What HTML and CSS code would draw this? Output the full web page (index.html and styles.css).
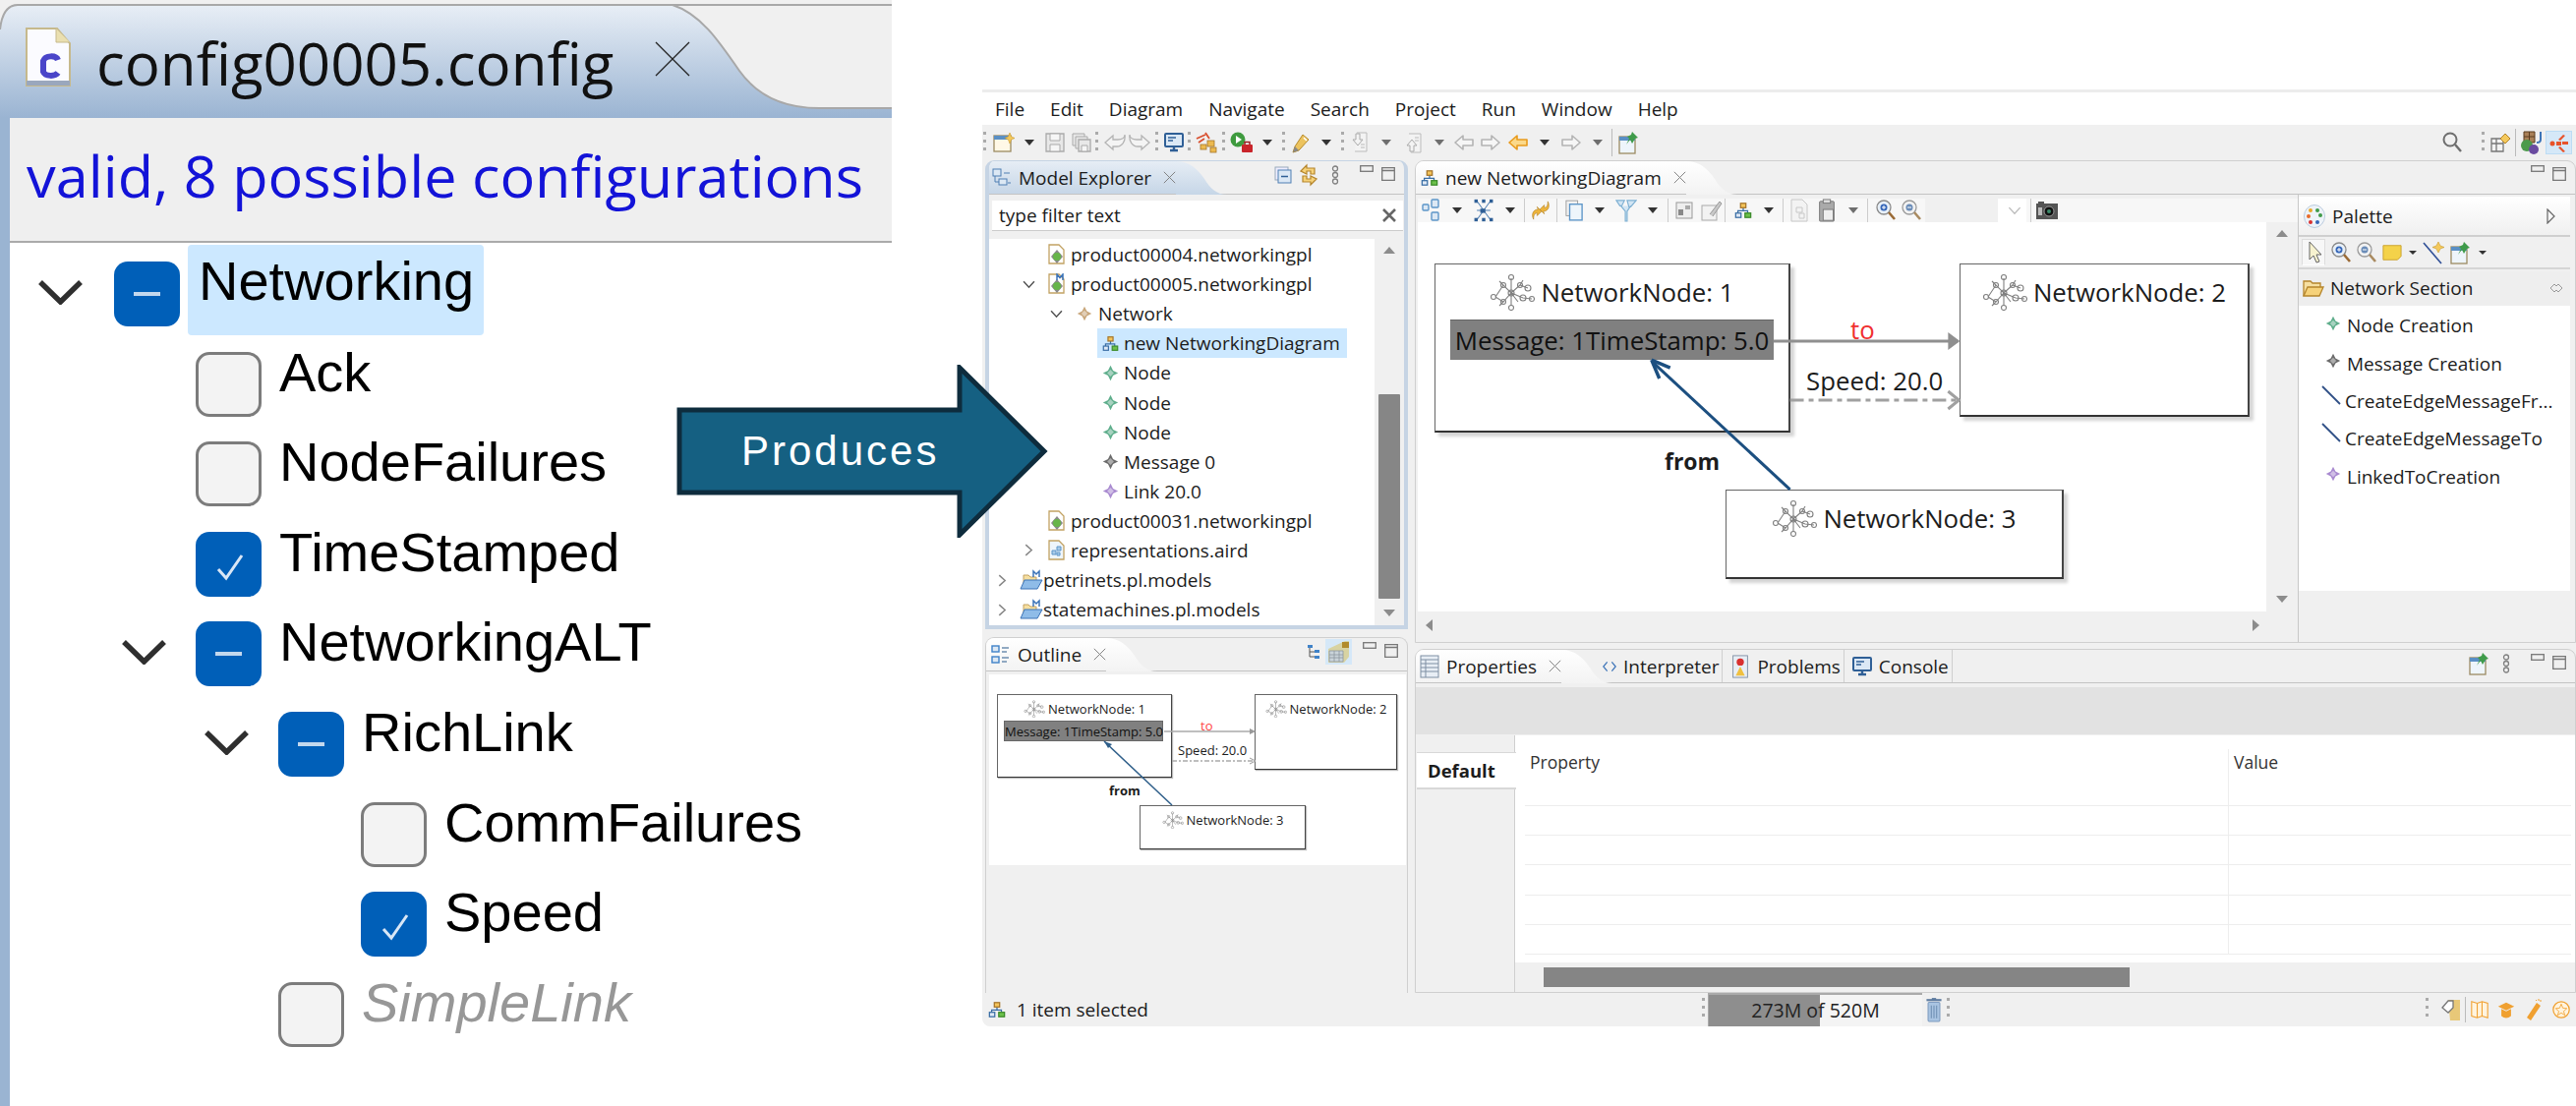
FILE: index.html
```html
<!DOCTYPE html>
<html lang="en">
<head>
  <meta charset="UTF-8">
  <title>Configuration produces model</title>
  <link rel="stylesheet" href="styles.css">
</head>
<body>
  <!-- shared icons -->
  <svg class="defs" width="0" height="0">
    <defs>
      <linearGradient id="gradConfig" x1="0" y1="0" x2="0" y2="1"><stop offset="0" stop-color="#e8eef6"/><stop offset="1" stop-color="#9ab4d2"/></linearGradient>
      <linearGradient id="gradBlue" x1="0" y1="0" x2="0" y2="1"><stop offset="0" stop-color="#e6edf5"/><stop offset="1" stop-color="#c6d6e7"/></linearGradient>
      <linearGradient id="gradWhite" x1="0" y1="0" x2="0" y2="1"><stop offset="0" stop-color="#fff"/><stop offset="1" stop-color="#f3f3f3"/></linearGradient>
      <symbol id="curve" viewBox="0 0 52 34" preserveAspectRatio="none"><path d="M0 0C14 0 22 8 29 18C35 28 42 34 52 34H0Z"/></symbol>
      <symbol id="i-net" viewBox="0 0 46 38"><g fill="none" stroke="#808080" stroke-width="1.100"><path d="M22 5V33M6 24L14 12L22 20L31 12L39 15M6 24L14 29L22 20L34 25L43 26M14 12L10 8M31 12L34 7M14 29L10 33M22 20L29 29"/><circle cx="22" cy="4" r="2.500"/><circle cx="22" cy="35" r="2.500"/><circle cx="4" cy="24" r="2.500"/><circle cx="14" cy="12" r="2.500"/><circle cx="14" cy="29" r="2.500"/><circle cx="31" cy="12" r="2.500"/><circle cx="39" cy="15" r="3"/><circle cx="34" cy="25" r="3"/><circle cx="43" cy="26" r="2.500"/><circle cx="22" cy="20" r="3"/></g></symbol>
      <symbol id="i-star" viewBox="0 0 20 20"><path d="M10 1L13 7L19 10L13 13L10 19L7 13L1 10L7 7Z"/><path d="M10 6L14 10L10 14L6 10Z" fill="#fff" fill-opacity=".45"/></symbol>
      <symbol id="i-org" viewBox="0 0 20 20"><g stroke="#3a6ea5" stroke-width="1.400"><path d="M10 7V11M4 13V10.500H15V13" fill="none"/><rect x="7" y="2" width="6" height="5" fill="#f4c45a" stroke="#a5752a"/><rect x="1.500" y="13" width="6" height="5" fill="#dfe9f5"/><rect x="12" y="13" width="6.500" height="5" fill="#6cc04a" stroke="#3b8a2a"/></g></symbol>
      <symbol id="i-prod" viewBox="0 0 20 22"><path d="M2 1H12L17 6V20H2Z" fill="#fff" stroke="#c2a263" stroke-width="1.300"/><path d="M10 6L16 13L10 20L4 13Z" fill="#8a8a8a"/><circle cx="10" cy="13" r="4" fill="#67b54a"/></symbol>
      <symbol id="i-prodm" viewBox="0 0 20 22"><path d="M2 1H12L17 6V20H2Z" fill="#fff" stroke="#c2a263" stroke-width="1.300"/><path d="M10 6L16 13L10 20L4 13Z" fill="#8a8a8a"/><circle cx="10" cy="13" r="4" fill="#67b54a"/><path d="M10 7V1L13 4.500L16 1V7" fill="none" stroke="#3d74b8" stroke-width="1.500"/></symbol>
      <symbol id="i-aird" viewBox="0 0 20 22"><path d="M2 1H12L17 6V20H2Z" fill="#eef5fb" stroke="#c2a263" stroke-width="1.300"/><path d="M10 7H14V11H10ZM5 11H9V15H5ZM10 13H13V16H10Z" fill="#a9cbe8" stroke="#5c95c8"/></symbol>
      <symbol id="i-proj" viewBox="0 0 24 20"><path d="M4 17V5H9L11 7H17V17Z" fill="#f6dfa0" stroke="#c2a263"/><path d="M1 19L5 10H23L18 19Z" fill="#8fbce8" stroke="#3d74b8"/><path d="M14 7V1L17 4L20 1V7" fill="none" stroke="#3d74b8" stroke-width="1.500"/></symbol>
      <symbol id="i-new" viewBox="0 0 22 22"><rect x="1" y="4" width="17" height="16" fill="#fff8e6" stroke="#9b8a62" stroke-width="1.300"/><rect x="1" y="4" width="17" height="4" fill="#5a8fc4"/><path d="M17 1L18.500 5L22 6.500L18.500 8L17 12L15.500 8L12 6.500L15.500 5Z" fill="#f4c95c" stroke="#c99a2b" stroke-width=".6"/></symbol>
      <symbol id="i-save" viewBox="0 0 20 20"><path d="M1 1H19V19H1Z" fill="#e8e8e8" stroke="#aaa" stroke-width="1.300"/><path d="M5 1H15V8H5ZM5 12H15V19H5Z" fill="#f6f6f6" stroke="#aaa"/></symbol>
      <symbol id="i-saveall" viewBox="0 0 20 20"><path d="M1 1H13V13H1Z" fill="#e8e8e8" stroke="#aaa"/><path d="M4 4H16V16H4Z" fill="#e8e8e8" stroke="#aaa"/><path d="M7 7H19V19H7Z" fill="#e8e8e8" stroke="#aaa" stroke-width="1.300"/><path d="M10 13H16V19H10Z" fill="#f6f6f6" stroke="#aaa"/></symbol>
      <symbol id="i-undo" viewBox="0 0 22 18"><path d="M1 9L9 2V6H14C18 6 21 4 21 1C22 8 18 13 13 13H9V16Z" fill="#f4f4f4" stroke="#b4b4b4" stroke-width="1.300"/></symbol>
      <symbol id="i-mon" viewBox="0 0 20 20"><rect x="1" y="1" width="18" height="13" rx="1" fill="#dbe8f5" stroke="#2f5f96" stroke-width="2"/><path d="M4 5H12M4 8H9" stroke="#2f5f96" stroke-width="1.300"/><path d="M6 18H14M10 14V18" stroke="#2f5f96" stroke-width="2.400"/></symbol>
      <symbol id="i-pkg" viewBox="0 0 24 22"><g fill="#ecb94f" stroke="#a5752a" stroke-width=".8"><rect x="12" y="9" width="7" height="6"/><rect x="5" y="13" width="6" height="5"/><rect x="15" y="16" width="6" height="5"/></g><path d="M1 7L10 3M3 11L9 7M10 1L14 7" stroke="#d9502f" stroke-width="1.800"/></symbol>
      <symbol id="i-run" viewBox="0 0 24 22"><circle cx="8" cy="8" r="7.500" fill="#3f9b3f"/><path d="M6 4L12 8L6 12Z" fill="#fff"/><rect x="12" y="13" width="11" height="8" rx="1" fill="#c9242a"/><path d="M15 13V10.500H20V13" fill="none" stroke="#9a1b20" stroke-width="1.500"/></symbol>
      <symbol id="i-wand" viewBox="0 0 24 24"><path d="M14 4L20 9L10 20L4 22L6 16Z" fill="#ecc35e" stroke="#b58a2b"/><path d="M4 22L6 16L10 20Z" fill="#888"/><path d="M15 7L18 10" stroke="#fff" stroke-width="1.500"/></symbol>
      <symbol id="i-get" viewBox="0 0 20 22"><path d="M7 1H17V20H5" fill="#f3f3f3" stroke="#bbb"/><path d="M6 2H10V8H13L8 14L3 8H6Z" fill="#f3f3f3" stroke="#aaa"/><path d="M11 13H15M11 16H15" stroke="#bbb"/></symbol>
      <symbol id="i-back" viewBox="0 0 20 18"><path d="M1 9L9 2V6H19V12H9V16Z" stroke-width="1.600" stroke-linejoin="round"/></symbol>
      <symbol id="i-pin" viewBox="0 0 22 24"><rect x="1" y="6" width="16" height="17" fill="#eef5fb" stroke="#9b8a62" stroke-width="1.300"/><rect x="1" y="6" width="16" height="4" fill="#5a8fc4"/><path d="M14 1L20 7L17 8L14 13L12 9L8 14L11 8L9 6L13 4Z" fill="#3f9b4a"/></symbol>
      <symbol id="i-x" viewBox="0 0 16 16"><path d="M1 1L15 15M15 1L1 15" fill="none" stroke="#808080" stroke-width="1.200"/></symbol>
      <symbol id="i-min" viewBox="0 0 14 8"><rect x=".7" y=".7" width="12.600" height="5.600" fill="none" stroke="#777" stroke-width="1.300"/></symbol>
      <symbol id="i-max" viewBox="0 0 14 14"><path d="M.7.700H13.300V13.300H.7ZM.7 3.500H13.300" fill="none" stroke="#777" stroke-width="1.300"/></symbol>
      <symbol id="i-menu" viewBox="0 0 8 20"><g fill="none" stroke="#808080" stroke-width="1.300"><circle cx="4" cy="3.500" r="2.500"/><circle cx="4" cy="10" r="2.500"/><circle cx="4" cy="16.500" r="2.500"/></g></symbol>
      <symbol id="i-explorer" viewBox="0 0 20 20"><g fill="#dce8f4" stroke="#4f7fb3"><rect x="1" y="1" width="8" height="7"/><rect x="7" y="11" width="8" height="6"/></g><path d="M3 8V14H7M12 5H18M16 15H19" fill="none" stroke="#4f7fb3"/></symbol>
      <symbol id="i-collapse" viewBox="0 0 18 18"><rect x="1" y="1" width="13" height="13" fill="#eef" stroke="#9ab"/><rect x="4" y="4" width="13" height="13" fill="#dbe8f5" stroke="#4f7fb3"/><path d="M7 10.500H14" stroke="#2f5f96" stroke-width="1.600"/></symbol>
      <symbol id="i-link" viewBox="0 0 22 22"><path d="M3 7L9 1V4H17V10H13V7H9V10ZM19 15L13 21V18H5V12H9V15H13V12Z" fill="#f6d27a" stroke="#b5852b" stroke-width="1.200"/></symbol>
      <symbol id="i-outline" viewBox="0 0 20 20"><g fill="#dce8f4" stroke="#3f82c8" stroke-width="1.400"><rect x="1" y="1" width="7" height="6"/><rect x="1" y="12" width="7" height="6"/></g><path d="M11 3H18M11 7H16M11 13H18M11 17H16" stroke="#6f8fb0" stroke-width="1.300"/></symbol>
      <symbol id="i-tree" viewBox="0 0 14 16"><path d="M3 3V13H8M3 8H8" fill="none" stroke="#555"/><path d="M1 1H6V4H1ZM8 6H13V9H8ZM8 12H13V15H8Z" fill="#3f82c8"/></symbol>
      <symbol id="i-thumb" viewBox="0 0 24 24"><path d="M1 9L18 1H22V17L17 23H1Z" fill="#d8d3a2"/><path d="M2 11H16V22H2ZM2 15H16M2 18H16M7 11V22M12 11V22" fill="#c9d3d9" stroke="#8d989f" stroke-width=".8"/><rect x="15" y="2" width="7" height="6" fill="#b18b2c"/></symbol>
      <symbol id="i-boxes" viewBox="0 0 18 24"><g fill="#dce8f4" stroke="#5c95c8" stroke-width="1.400"><rect x="1" y="6" width="6" height="6" rx="1"/><rect x="10" y="1" width="7" height="8" rx="1"/><rect x="10" y="14" width="7" height="8" rx="1"/></g></symbol>
      <symbol id="i-layout" viewBox="0 0 24 28"><g fill="none" stroke="#4f7fb3" stroke-width="1.200"><path d="M4 3L12 14L20 3M4 25L12 14L20 25M4 14H20"/></g><g fill="#2f5f96"><rect x="1" y="1" width="4" height="4"/><rect x="10" y="1" width="4" height="4"/><rect x="19" y="1" width="4" height="4"/><rect x="1" y="23" width="4" height="4"/><rect x="10" y="23" width="4" height="4"/><rect x="19" y="23" width="4" height="4"/><rect x="8" y="12" width="6" height="5"/></g></symbol>
      <symbol id="i-sync" viewBox="0 0 22 24"><path d="M3 22C0 16 3 11 8 11L7 8L12 13L7 18V15C4 15 3 18 3 22ZM19 2C22 8 19 13 14 13L15 16L10 11L15 6V9C18 9 19 6 19 2Z" fill="#eeb53c" stroke="#b5852b" stroke-width=".7"/></symbol>
      <symbol id="i-copy" viewBox="0 0 20 24"><rect x="1" y="1" width="13" height="17" fill="#f2f2f2" stroke="#999"/><rect x="5" y="5" width="14" height="18" fill="#eef5fb" stroke="#5c95c8" stroke-width="1.500"/></symbol>
      <symbol id="i-filter" viewBox="0 0 24 26"><path d="M1 2H10L7 8H5ZM13 2H23L17 9H15ZM6 8L11 14V25H13V14L17 8" fill="#d2e5f3" stroke="#7fb1d3" stroke-width="1.300"/></symbol>
      <symbol id="i-gray1" viewBox="0 0 18 18"><rect x="1" y="1" width="16" height="16" fill="#eee" stroke="#999"/><rect x="3" y="8" width="5" height="6" fill="#888"/><rect x="10" y="4" width="5" height="4" fill="#aaa"/></symbol>
      <symbol id="i-gray2" viewBox="0 0 22 22"><rect x="1" y="6" width="15" height="15" fill="#f2f2f2" stroke="#aaa"/><path d="M9 15L19 2L21 4L12 17" fill="#c8c8c8" stroke="#999"/></symbol>
      <symbol id="i-paste" viewBox="0 0 18 26"><rect x="1" y="3" width="16" height="22" rx="1" fill="#aaa" stroke="#777"/><rect x="5" y="1" width="8" height="4" fill="#ddd" stroke="#777"/><rect x="5" y="12" width="11" height="12" fill="#eee" stroke="#777"/></symbol>
      <symbol id="i-doc2" viewBox="0 0 18 24"><path d="M1 1H12L17 6V23H1Z" fill="#f3f3f3" stroke="#c8c8c8"/><path d="M6 9H12V14H6ZM9 15H14V20H9Z" fill="none" stroke="#c8c8c8"/></symbol>
      <symbol id="i-zin" viewBox="0 0 20 22"><circle cx="8" cy="8" r="7" fill="#e8f0f8" stroke="#8a8a8a" stroke-width="1.300"/><path d="M13 13L19 20" stroke="#9a6a35" stroke-width="2.600"/><circle cx="8" cy="8" r="3.500" fill="#3566b8"/><path d="M6 8H10M8 6V10" stroke="#fff"/></symbol>
      <symbol id="i-zout" viewBox="0 0 20 22"><circle cx="8" cy="8" r="7" fill="#f2f2f2" stroke="#9a9a9a" stroke-width="1.300"/><path d="M13 13L19 20" stroke="#a98a60" stroke-width="2.600"/><circle cx="8" cy="8" r="3.500" fill="#6a8cb8"/><path d="M6 8H10" stroke="#fff"/></symbol>
      <symbol id="i-cam" viewBox="0 0 22 18"><rect x="0" y="2" width="22" height="16" fill="#555"/><rect x="2" y="0" width="6" height="3" fill="#555"/><circle cx="13" cy="10" r="5" fill="#111" stroke="#999"/><circle cx="13" cy="10" r="2" fill="#3b8a6a"/><rect x="2" y="6" width="4" height="8" fill="#bbb"/></symbol>
      <symbol id="i-search" viewBox="0 0 20 22"><circle cx="8" cy="8" r="6.500" fill="none" stroke="#6e6e6e" stroke-width="2"/><path d="M13 13L19 20" stroke="#6e6e6e" stroke-width="2.400"/></symbol>
      <symbol id="i-persp" viewBox="0 0 20 20"><path d="M1 6H13V19H1ZM1 11H13M6 6V19" fill="#f3f3f3" stroke="#777" stroke-width="1.300"/><path d="M15 1L20 6L15 11L10 6Z" fill="#f4c95c" stroke="#b5852b"/></symbol>
      <symbol id="i-java" viewBox="0 0 24 24"><path d="M4 1H15V12H4ZM4 6H15M9.500 1V12" fill="#a98057" stroke="#5a3c20"/><path d="M21 1V9C21 12 19 12 17 12" fill="none" stroke="#3d74b8" stroke-width="2"/><circle cx="7" cy="15" r="6" fill="#4c9a4c"/><circle cx="14" cy="19" r="5" fill="#6a4ba0"/></symbol>
      <symbol id="i-sir" viewBox="0 0 20 22"><g fill="#e8532a"><circle cx="3" cy="11" r="2.500"/><rect x="7" y="9" width="5" height="4"/><path d="M9 7L14 2L16 3L11 8ZM9 15L14 20L16 19L11 14Z"/><rect x="13" y="9" width="6" height="3"/></g></symbol>
      <symbol id="i-palette" viewBox="0 0 22 24"><ellipse cx="11" cy="12" rx="10.500" ry="11.500" fill="#eef3f9" stroke="#bcd"/><circle cx="7" cy="6" r="2" fill="#e8a82a"/><circle cx="14" cy="6" r="2" fill="#3f9b4a"/><circle cx="5" cy="12" r="2" fill="#e86a2a"/><circle cx="17" cy="11" r="2" fill="#3f9b4a"/><circle cx="7" cy="18" r="2" fill="#d9302f"/><circle cx="14" cy="18" r="2" fill="#3566b8"/></symbol>
      <symbol id="i-cursor" viewBox="0 0 16 24"><path d="M2 2L14 15H9L12 22L9 23L6 16L2 20Z" fill="#f7f2cf" stroke="#666"/></symbol>
      <symbol id="i-note" viewBox="0 0 22 18"><path d="M1 1H21V13L17 17H1Z" fill="#f4d24a" stroke="#c9a02b"/></symbol>
      <symbol id="i-conn" viewBox="0 0 22 24"><path d="M1 2L19 23" stroke="#2f4f96" stroke-width="1.600"/><path d="M16 1L18 5L22 6.500L18 8L16 12L14 8L10 6.500L14 5Z" fill="#f4c95c" stroke="#c99a2b" stroke-width=".6"/></symbol>
      <symbol id="i-folder" viewBox="0 0 22 18"><path d="M1 17V2H8L10 4H18V8" fill="#f6dfa0" stroke="#b5852b" stroke-width="1.300"/><path d="M1 17L5 8H21L17 17Z" fill="#f6d27a" stroke="#b5852b" stroke-width="1.300"/></symbol>
      <symbol id="i-edge" viewBox="0 0 20 20"><path d="M1 1L19 19" stroke="#2f4f86" stroke-width="1.800"/></symbol>
      <symbol id="i-props" viewBox="0 0 20 24"><rect x="1" y="1" width="18" height="22" fill="#e8eef5" stroke="#7f8fa3"/><path d="M1 5H19M1 9H19M1 13H19M1 17H19M6 5V23" stroke="#7f8fa3"/></symbol>
      <symbol id="i-prob" viewBox="0 0 18 26"><rect x="1" y="1" width="16" height="24" fill="#e8eef5" stroke="#7f8fa3"/><circle cx="9" cy="8" r="4" fill="#d9302f"/><path d="M9 13L14 23H4Z" fill="#f0c040"/></symbol>
      <symbol id="i-code" viewBox="0 0 18 14"><path d="M6 1L1 7L6 13M12 1L17 7L12 13" fill="none" stroke="#3d74b8" stroke-width="1.600"/></symbol>
      <symbol id="i-trash" viewBox="0 0 14 24"><rect x="1.500" y="5" width="11" height="18" rx="1" fill="#a9c4e2" stroke="#7f9cc0"/><path d="M0 3H14" stroke="#5f7ca0" stroke-width="2"/><path d="M5 2H9" stroke="#5f7ca0" stroke-width="2"/><path d="M4.500 8V20M7 8V20M9.500 8V20" stroke="#6f8fb3"/></symbol>
      <symbol id="i-flag" viewBox="0 0 22 24"><path d="M8 2H20V23H10Z" fill="#e8c878"/><path d="M2 10L8 3H13V10L8 15Z" fill="#fff" stroke="#777" stroke-width="1.300"/></symbol>
      <symbol id="i-book" viewBox="0 0 22 24"><path d="M1 2L8 4L14 2L21 4V22L14 20L8 22L1 20ZM8 4V22M14 2V20" fill="#fff4df" stroke="#f0a030" stroke-width="1.300"/></symbol>
      <symbol id="i-cap" viewBox="0 0 22 24"><path d="M1 8L11 3L21 8L11 13Z" fill="#f0a030"/><path d="M5 11V20C9 23 13 23 17 20V11L11 14Z" fill="#f0a030"/></symbol>
      <symbol id="i-stick" viewBox="0 0 18 24"><path d="M12 5L16 8L6 23L2 20Z" fill="#f0a030"/><path d="M14 1V3M17 3H15M11 2L12 3" stroke="#f0a030"/></symbol>
      <symbol id="i-badge" viewBox="0 0 22 24"><circle cx="11" cy="12" r="10" fill="#fff4df" stroke="#f0a030" stroke-width="1.500"/><path d="M11 5L13 10L18 10.500L14 14L15.500 19L11 16L6.500 19L8 14L4 10.500L9 10Z" fill="none" stroke="#f0a030"/></symbol>
    </defs>
  </svg>

  <div class="page">
    <!-- feature configuration editor -->
    <section class="config">
      <div class="config-tabbar">
        <svg class="config-tabshape" viewBox="0 0 907 120" preserveAspectRatio="none">
          <path d="M0 30C2 12 8 5 18 5H684C712 14 730 40 752 72C772 100 800 110 833 110H907V120H0Z" fill="url(#gradConfig)"/>
          <path d="M0 30C2 12 8 5 18 5H684C712 14 730 40 752 72C772 100 800 110 833 110H907" fill="none" stroke="#a8a8a8" stroke-width="2"/>
          <path d="M684 5H907" stroke="#a8a8a8" stroke-width="2"/>
        </svg>
        <svg class="config-fileicon" viewBox="0 0 46 60">
          <path d="M1 1H32L45 16V59H1Z" fill="#fbfbff" stroke="#c6b98c" stroke-width="2"/>
          <path d="M31 1V15H45" fill="#eadfb0" stroke="#c6b98c"/>
          <path d="M1 54H45V59H1Z" fill="#9aa7bd"/>
          <path d="M33 33C31 28 20 28 18 34V45C20 50 30 50 33 46" fill="none" stroke="#4a45c9" stroke-width="6"/>
        </svg>
        <span class="config-title">config00005.config</span>
        <svg class="config-close" viewBox="0 0 36 36"><path d="M1 1L35 35M35 1L1 35" stroke="#222" stroke-width="1.300"/></svg>
      </div>
      <div class="config-body">
        <div class="config-status">valid, 8 possible configurations</div>
        <ul class="feature-tree">
          <li class="feature l0"><svg class="chev" viewBox="0 0 47 26"><path d="M3 3L23.500 23L44 3"/></svg><span class="box part"></span><span class="name current">Networking</span></li>
          <li class="feature l1"><span class="box"></span><span class="name">Ack</span></li>
          <li class="feature l1"><span class="box"></span><span class="name">NodeFailures</span></li>
          <li class="feature l1"><span class="box on"><svg viewBox="0 0 67 66"><path d="M23 38L31 47L47 24"/></svg></span><span class="name">TimeStamped</span></li>
          <li class="feature l1"><svg class="chev" viewBox="0 0 47 26"><path d="M3 3L23.500 23L44 3"/></svg><span class="box part"></span><span class="name">NetworkingALT</span></li>
          <li class="feature l2"><svg class="chev" viewBox="0 0 47 26"><path d="M3 3L23.500 23L44 3"/></svg><span class="box part"></span><span class="name">RichLink</span></li>
          <li class="feature l3"><span class="box"></span><span class="name">CommFailures</span></li>
          <li class="feature l3"><span class="box on"><svg viewBox="0 0 67 66"><path d="M23 38L31 47L47 24"/></svg></span><span class="name">Speed</span></li>
          <li class="feature l2"><span class="box"></span><span class="name off">SimpleLink</span></li>
        </ul>
      </div>
    </section>

    <!-- the big arrow lies over the gap between the two pictures -->
    <div class="produces">
      <svg viewBox="0 0 378 176"><path d="M3 46H288V3L374 88L288 173V130H3Z" fill="#156082" stroke="#0e2c3d" stroke-width="5"/></svg>
      <span class="produces-label">Produces</span>
    </div>

    <!-- eclipse window -->
    <section class="eclipse">
      <nav class="menubar">
        <span>File</span><span>Edit</span><span>Diagram</span><span>Navigate</span><span>Search</span><span>Project</span><span>Run</span><span>Window</span><span>Help</span>
      </nav>
      <div class="toolbar">
        <i class="grip"></i>
        <svg class="ti w22 m7"><use href="#i-new"/></svg><i class="dd m10"></i>
        <svg class="ti w20 m11"><use href="#i-save"/></svg><svg class="ti w20 m7"><use href="#i-saveall"/></svg>
        <i class="grip m4"></i>
        <svg class="ti w22 m6"><use href="#i-undo"/></svg><svg class="ti w22 flip m3"><use href="#i-undo"/></svg>
        <i class="grip m5"></i>
        <svg class="ti w20 m6"><use href="#i-mon"/></svg>
        <i class="grip m4"></i>
        <svg class="ti w24 m5"><use href="#i-pkg"/></svg>
        <i class="grip m3"></i>
        <svg class="ti w24 m5"><use href="#i-run"/></svg><i class="dd m9"></i>
        <i class="grip m10"></i>
        <svg class="ti w24 m4"><use href="#i-wand"/></svg><i class="dd m9"></i>
        <i class="grip m10"></i>
        <svg class="ti w20 m6"><use href="#i-get"/></svg><i class="dd dim m12"></i>
        <svg class="ti w20 m13 vflip"><use href="#i-get"/></svg><i class="dd dim m11"></i>
        <svg class="ti w20 arrow-gray m10"><use href="#i-back"/></svg><svg class="ti w20 arrow-gray flip m7"><use href="#i-back"/></svg>
        <svg class="ti w20 arrow-orange m8"><use href="#i-back"/></svg><i class="dd m12"></i>
        <svg class="ti w20 arrow-gray flip m12"><use href="#i-back"/></svg><i class="dd dim m12"></i>
        <i class="vsep m9"></i>
        <svg class="ti w22 m6"><use href="#i-pin"/></svg>
        <span class="spring"></span>
        <svg class="ti w20"><use href="#i-search"/></svg>
        <i class="grip m20"></i>
        <svg class="ti w20 m6"><use href="#i-persp"/></svg>
        <i class="vsep m5"></i>
        <svg class="ti w24 m4"><use href="#i-java"/></svg>
        <span class="persp-on"><svg class="ti w20"><use href="#i-sir"/></svg></span>
      </div>

      <div class="workbench">
        <div class="col col-left">
          <div class="pane explorer">
            <div class="pane-head">
              <div class="tab tab-explorer">
                <svg class="ti w20"><use href="#i-explorer"/></svg>
                <span>Model Explorer</span>
                <svg class="tab-x"><use href="#i-x"/></svg>
              </div>
              <svg class="tab-curve blue"><use href="#curve"/></svg>
              <span class="spring"></span>
              <div class="pane-tools">
                <svg class="ti w18"><use href="#i-collapse"/></svg>
                <svg class="ti w22 m6"><use href="#i-link"/></svg>
                <svg class="ti-menu"><use href="#i-menu"/></svg>
                <svg class="ti-min"><use href="#i-min"/></svg>
                <svg class="ti-max"><use href="#i-max"/></svg>
              </div>
            </div>
            <div class="filter">
              <span>type filter text</span>
              <svg viewBox="0 0 14 14"><path d="M1 1L13 13M13 1L1 13" stroke="#666" stroke-width="2.600"/></svg>
            </div>
            <div class="tree-wrap">
              <ul class="tree">
                <li class="row d1"><i class="tw"></i><span class="ico"><svg><use href="#i-prod"/></svg></span><span>product00004.networkingpl</span></li>
                <li class="row d1"><i class="tw"><svg viewBox="0 0 12 8"><path d="M1 1L6 6.500L11 1"/></svg></i><span class="ico"><svg><use href="#i-prodm"/></svg></span><span>product00005.networkingpl</span></li>
                <li class="row d2"><i class="tw"><svg viewBox="0 0 12 8"><path d="M1 1L6 6.500L11 1"/></svg></i><span class="ico star"><svg class="tan"><use href="#i-star"/></svg></span><span>Network</span></li>
                <li class="row d3 selected"><span class="ico"><svg class="small"><use href="#i-org"/></svg></span><span>new NetworkingDiagram</span></li>
                <li class="row d3"><span class="ico"><svg class="small green"><use href="#i-star"/></svg></span><span>Node</span></li>
                <li class="row d3"><span class="ico"><svg class="small green"><use href="#i-star"/></svg></span><span>Node</span></li>
                <li class="row d3"><span class="ico"><svg class="small green"><use href="#i-star"/></svg></span><span>Node</span></li>
                <li class="row d3"><span class="ico"><svg class="small dark"><use href="#i-star"/></svg></span><span>Message 0</span></li>
                <li class="row d3"><span class="ico"><svg class="small purple"><use href="#i-star"/></svg></span><span>Link 20.0</span></li>
                <li class="row d1"><i class="tw"></i><span class="ico"><svg><use href="#i-prod"/></svg></span><span>product00031.networkingpl</span></li>
                <li class="row d1"><i class="tw"><svg class="right" viewBox="0 0 12 8"><path d="M1 1L6 6.500L11 1"/></svg></i><span class="ico"><svg><use href="#i-aird"/></svg></span><span>representations.aird</span></li>
                <li class="row d0"><i class="tw"><svg class="right" viewBox="0 0 12 8"><path d="M1 1L6 6.500L11 1"/></svg></i><span class="ico"><svg class="proj"><use href="#i-proj"/></svg></span><span>petrinets.pl.models</span></li>
                <li class="row d0"><i class="tw"><svg class="right" viewBox="0 0 12 8"><path d="M1 1L6 6.500L11 1"/></svg></i><span class="ico"><svg class="proj"><use href="#i-proj"/></svg></span><span>statemachines.pl.models</span></li>
              </ul>
              <div class="vbar">
                <i class="tri up"></i>
                <i class="thumb"></i>
                <i class="tri down"></i>
              </div>
            </div>
          </div>

          <div class="pane outline">
            <div class="pane-head">
              <div class="tab tab-plain">
                <svg class="ti w20"><use href="#i-outline"/></svg>
                <span>Outline</span>
                <svg class="tab-x"><use href="#i-x"/></svg>
              </div>
              <svg class="tab-curve white"><use href="#curve"/></svg>
              <span class="spring"></span>
              <div class="pane-tools">
                <svg class="ti w14"><use href="#i-tree"/></svg>
                <span class="tool-on"><svg class="ti w24"><use href="#i-thumb"/></svg></span>
                <svg class="ti-min"><use href="#i-min"/></svg>
                <svg class="ti-max"><use href="#i-max"/></svg>
              </div>
            </div>
            <div class="thumb-canvas">
              <div class="node t1"><svg class="net"><use href="#i-net"/></svg><span>NetworkNode: 1</span></div>
              <div class="msg t-msg">Message: 1TimeStamp: 5.0</div>
              <div class="node t2"><svg class="net"><use href="#i-net"/></svg><span>NetworkNode: 2</span></div>
              <div class="node t3"><svg class="net"><use href="#i-net"/></svg><span>NetworkNode: 3</span></div>
              <span class="lbl t-to">to</span>
              <span class="lbl t-speed">Speed: 20.0</span>
              <span class="lbl t-from">from</span>
              <svg class="wires" viewBox="0 0 422 194">
                <path d="M177 58H268" stroke="#aaa" stroke-width="1.500"/><path d="M264 55L270 58L264 61Z" fill="#999"/>
                <path d="M185 88H270" stroke="#aaa" stroke-width="1.500" stroke-dasharray="5 2 2 2"/><path d="M264 85L270 88L264 91" fill="none" stroke="#999"/>
                <path d="M185 133L116 68" stroke="#2f5f8a" stroke-width="1.500"/><path d="M116 68L124 71L120 75Z" fill="#2f5f8a"/>
              </svg>
            </div>
          </div>
        </div>

        <div class="col col-right">
          <div class="pane editor">
            <div class="pane-head">
              <div class="tab tab-plain tab-editor">
                <svg class="ti w18"><use href="#i-org"/></svg>
                <span>new NetworkingDiagram</span>
                <svg class="tab-x"><use href="#i-x"/></svg>
              </div>
              <svg class="tab-curve white"><use href="#curve"/></svg>
              <span class="spring"></span>
              <div class="pane-tools">
                <svg class="ti-min"><use href="#i-min"/></svg>
                <svg class="ti-max"><use href="#i-max"/></svg>
              </div>
            </div>
            <div class="editor-body">
              <div class="editor-main">
                <div class="dtools">
                  <svg class="dt w18"><use href="#i-boxes"/></svg><i class="dd m13"></i>
                  <svg class="dt w24 m10"><use href="#i-layout"/></svg><i class="dd m10"></i>
                  <i class="dsep m9"></i>
                  <svg class="dt w20 m6"><use href="#i-sync"/></svg>
                  <i class="dsep m6"></i>
                  <svg class="dt w18 m8"><use href="#i-copy"/></svg><i class="dd m12"></i>
                  <svg class="dt w22 m11"><use href="#i-filter"/></svg><i class="dd m11"></i>
                  <i class="dsep m10"></i>
                  <svg class="dt w18 m7"><use href="#i-gray1"/></svg>
                  <svg class="dt w22 m8"><use href="#i-gray2"/></svg>
                  <i class="dsep m2"></i>
                  <svg class="dt w18 m9"><use href="#i-org"/></svg><i class="dd m12"></i>
                  <i class="dsep m9"></i>
                  <svg class="dt w18 m7"><use href="#i-doc2"/></svg>
                  <svg class="dt w18 m10"><use href="#i-paste"/></svg><i class="dd dim m13"></i>
                  <i class="dsep m9"></i>
                  <svg class="dt w20 m8"><use href="#i-zin"/></svg>
                  <svg class="dt w20 m6"><use href="#i-zout"/></svg>
                  <span class="dtools-gray m4"></span>
                  <span class="dtools-combo"><svg viewBox="0 0 12 8"><path d="M1 1L6 6.500L11 1"/></svg></span>
                  <i class="dsep m4"></i>
                  <svg class="dt w22 m5"><use href="#i-cam"/></svg>
                </div>
                <div class="canvas-wrap">
                  <div class="canvas">
                    <div class="node n1"><svg class="net"><use href="#i-net"/></svg><span>NetworkNode: 1</span></div>
                    <div class="msg n-msg">Message: 1TimeStamp: 5.0</div>
                    <div class="node n2"><svg class="net"><use href="#i-net"/></svg><span>NetworkNode: 2</span></div>
                    <div class="node n3"><svg class="net"><use href="#i-net"/></svg><span>NetworkNode: 3</span></div>
                    <span class="lbl n-to">to</span>
                    <span class="lbl n-speed">Speed: 20.0</span>
                    <span class="lbl n-from">from</span>
                    <svg class="wires" viewBox="0 0 864 396">
                      <path d="M362 121H550" stroke="#8f8f8f" stroke-width="3"/><path d="M540 112L552 121L540 130Z" fill="#8f8f8f"/>
                      <path d="M379 181H550" stroke="#a0a0a0" stroke-width="3" stroke-dasharray="14 5 5 5"/><path d="M540 172L551 181L540 190" fill="none" stroke="#a0a0a0" stroke-width="3"/>
                      <path d="M379 272L240 143" stroke="#1c4f80" stroke-width="3"/><path d="M238 140L257 148M238 140L246 159" fill="none" stroke="#1c4f80" stroke-width="3.500"/>
                    </svg>
                  </div>
                  <div class="vbar plain">
                    <i class="tri up"></i>
                    <i class="tri down"></i>
                  </div>
                </div>
                <div class="hbar">
                  <i class="tri left"></i>
                  <i class="tri right"></i>
                </div>
              </div>

              <aside class="palette">
                <div class="pal-head">
                  <svg class="ti w22"><use href="#i-palette"/></svg>
                  <span>Palette</span>
                  <svg class="pal-arrow" viewBox="0 0 9 16"><path d="M1 1L8 8L1 15Z" fill="none" stroke="#666" stroke-width="1.200"/></svg>
                </div>
                <div class="pal-tools">
                  <span class="pal-cursor"><svg><use href="#i-cursor"/></svg></span>
                  <svg class="dt w20 m6"><use href="#i-zin"/></svg>
                  <svg class="dt w20 m6"><use href="#i-zout"/></svg>
                  <svg class="dt w20 m6 note"><use href="#i-note"/></svg><i class="dd tiny m7"></i>
                  <svg class="dt w22 m6"><use href="#i-conn"/></svg>
                  <svg class="dt w22 m6"><use href="#i-pin"/></svg><i class="dd tiny m7"></i>
                </div>
                <div class="pal-section">
                  <svg class="ti w22"><use href="#i-folder"/></svg>
                  <span>Network Section</span>
                  <svg class="pal-pin" viewBox="0 0 14 10"><path d="M1 5L5 1L7 3L9 1L13 5L9 9L7 7L5 9Z" fill="none" stroke="#999"/></svg>
                </div>
                <ul class="pal-list">
                  <li class="pal-item"><svg class="green"><use href="#i-star"/></svg><span>Node Creation</span></li>
                  <li class="pal-item"><svg class="dark"><use href="#i-star"/></svg><span>Message Creation</span></li>
                  <li class="pal-item edge"><svg><use href="#i-edge"/></svg><span>CreateEdgeMessageFr...</span></li>
                  <li class="pal-item edge"><svg><use href="#i-edge"/></svg><span>CreateEdgeMessageTo</span></li>
                  <li class="pal-item"><svg class="purple"><use href="#i-star"/></svg><span>LinkedToCreation</span></li>
                </ul>
              </aside>
            </div>
          </div>

          <div class="pane props">
            <div class="pane-head">
              <div class="tab tab-plain tab-props">
                <svg class="ti w20"><use href="#i-props"/></svg>
                <span>Properties</span>
                <svg class="tab-x"><use href="#i-x"/></svg>
              </div>
              <svg class="tab-curve white"><use href="#curve"/></svg>
              <div class="tab-off off-interp"><svg class="ti w14"><use href="#i-code"/></svg><span>Interpreter</span></div>
              <div class="tab-off"><svg class="ti w20"><use href="#i-prob"/></svg><span>Problems</span></div>
              <div class="tab-off"><svg class="ti w20"><use href="#i-mon"/></svg><span>Console</span></div>
              <span class="spring"></span>
              <div class="pane-tools">
                <svg class="ti w22"><use href="#i-pin"/></svg>
                <svg class="ti-menu"><use href="#i-menu"/></svg>
                <svg class="ti-min"><use href="#i-min"/></svg>
                <svg class="ti-max"><use href="#i-max"/></svg>
              </div>
            </div>
            <div class="props-band"></div>
            <div class="props-body">
              <div class="props-side">
                <div class="props-default">Default</div>
              </div>
              <div class="props-main">
                <div class="props-table">
                  <div class="pt-row pt-head"><span>Property</span><span>Value</span></div>
                  <div class="pt-row"></div>
                  <div class="pt-row"></div>
                  <div class="pt-row"></div>
                  <div class="pt-row"></div>
                  <div class="pt-row"></div>
                </div>
                <div class="props-scroll"><i></i></div>
              </div>
            </div>
          </div>
        </div>
      </div>

      <footer class="statusbar">
        <svg class="ti w18"><use href="#i-org"/></svg>
        <span class="status-msg">1 item selected</span>
        <i class="grip"></i>
        <div class="heap"><i class="heap-used"></i><span>273M of 520M</span></div>
        <svg class="heap-trash"><use href="#i-trash"/></svg>
        <i class="grip"></i>
        <span class="spring"></span>
        <i class="grip"></i>
        <svg class="ti w22 m9"><use href="#i-flag"/></svg>
        <i class="vsep short m3"></i>
        <svg class="ti w18 m5"><use href="#i-book"/></svg>
        <svg class="ti w18 m9"><use href="#i-cap"/></svg>
        <svg class="ti w18 m10"><use href="#i-stick"/></svg>
        <svg class="ti w18 m10"><use href="#i-badge"/></svg>
      </footer>
    </section>
  </div>
</body>
</html>
```

FILE: styles.css
```css
/* Global */
* { box-sizing: border-box; }
html, body { margin: 0; background: #fff; }
body {
  width: 2620px;
  height: 1125px;
  overflow: hidden;
  font-family: "Open Sans", "Noto Sans", sans-serif;
  color: #1c1c1c;
}
ul { list-style: none; margin: 0; padding: 0; }
i { display: block; font-style: normal; }
svg { display: block; flex: none; }
.defs { position: absolute; }
.page { display: flex; align-items: flex-start; height: 1125px; position: relative; }
.spring { flex: 1; }

/* Left: feature configuration */
.config { width: 907px; height: 1125px; flex: none; }
.config-tabbar {
  position: relative;
  height: 120px;
  background: #f0f0f0;
  display: flex;
  align-items: flex-start;
}
.config-tabshape { position: absolute; left: 0; top: 0; width: 907px; height: 120px; }
.config-fileicon { position: relative; width: 46px; height: 60px; margin: 28px 0 0 26px; }
.config-title {
  position: relative;
  font-size: 60px;
  line-height: 80px;
  margin: 24px 0 0 26px;
  color: #111;
}
.config-close { position: relative; width: 36px; height: 36px; margin: 42px 0 0 42px; }
.config-body { border-left: 10px solid #9ab4d2; height: 1005px; }
.config-status {
  height: 127px;
  padding: 22px 0 0 17px;
  background: #efefef;
  border-bottom: 2px solid #aaa;
  color: #1313d8;
  font-size: 59.4px;
  line-height: 72px;
  white-space: nowrap;
  overflow: hidden;
}
.feature-tree { padding-top: 18px; }
.feature {
  display: flex;
  align-items: flex-start;
  height: 91.6px;
  position: relative;
  font-family: "Liberation Sans", Arial, sans-serif;
  font-size: 56px;
  line-height: 44px;
  color: #000;
}
.feature .name { margin-left: 18px; }
.feature .name.off { color: #979797; font-style: italic; }
.feature .name.current {
  background: #cce8ff;
  border-radius: 4px;
  height: 92px;
  padding: 15px 10px 0 11px;
  margin-left: 8px;
  margin-top: -16px;
}
.l0 { padding-left: 106px; }
.l1 { padding-left: 189px; }
.l2 { padding-left: 273px; }
.l3 { padding-left: 357px; }
.chev {
  position: absolute;
  top: 19px;
  width: 47px;
  height: 26px;
  fill: none;
  stroke: #2f2f2f;
  stroke-width: 5.5px;
}
.l0 .chev { left: 28px; }
.l1 .chev { left: 113px; }
.l2 .chev { left: 197px; }
.box {
  width: 67px;
  height: 66px;
  flex: none;
  margin-top: 1px;
  border-radius: 14px;
  background: #f3f3f3;
  border: 3px solid #7c7c7c;
  position: relative;
}
.box.on, .box.part { background: #005fb8; border: 0; }
.box.part::after {
  content: "";
  position: absolute;
  left: 20px;
  top: 31px;
  width: 27px;
  height: 4px;
  background: #c3d8ee;
}
.box svg { width: 67px; height: 66px; fill: none; stroke: #d9e7f6; stroke-width: 3px; }

/* Arrow between the two pictures */
.produces {
  position: absolute;
  left: 688px;
  top: 371px;
  width: 378px;
  height: 176px;
  z-index: 2;
}
.produces svg { width: 378px; height: 176px; }
.produces-label {
  position: absolute;
  left: 66px;
  top: 63px;
  font-family: "Liberation Sans", Arial, sans-serif;
  font-size: 42px;
  line-height: 50px;
  letter-spacing: 3px;
  color: #fff;
}

/* Eclipse window */
.eclipse {
  margin: 91px 0 0 92px;
  width: 1621px;
  height: 953px;
  flex: none;
  background: #f0f0f0;
  border-top: 3px solid #ececec;
  border-bottom-left-radius: 8px;
  font-size: 19px;
  position: relative;
}
.menubar {
  height: 33px;
  background: #fff;
  display: flex;
  gap: 26px;
  padding-left: 13px;
  align-items: center;
  font-size: 19px;
  white-space: nowrap;
}
.toolbar {
  height: 36px;
  display: flex;
  align-items: center;
  padding-left: 1px;
}
.ti { height: 24px; }
.w14 { width: 14px; }
.w18 { width: 18px; }
.w20 { width: 20px; }
.w22 { width: 22px; }
.w24 { width: 24px; }
.flip { transform: scaleX(-1); }
.vflip { transform: scaleY(-1); }
.grip {
  width: 3px;
  height: 22px;
  background: repeating-linear-gradient(#aaa 0 3px, transparent 3px 8px);
}
.dd {
  width: 0;
  height: 0;
  border: 5.5px solid transparent;
  border-top: 6px solid #333;
  border-bottom: 0;
  box-sizing: content-box;
}
.dd.dim { border-top-color: #6e6e6e; }
.dd.tiny { border-width: 4px; border-bottom: 0; border-top-color: #333; }
.arrow-gray { fill: #f6f6f6; stroke: #b4b4b4; }
.arrow-orange { fill: #fbd98a; stroke: #e89a1c; }
.vsep { width: 1px; height: 28px; background: #bbb; }
.vsep.short { height: 26px; }
.persp-on {
  width: 27px;
  height: 24px;
  margin: 0 4px 0 2px;
  background: #d5e8f8;
  border: 1px solid #bcdcf4;
  display: flex;
  justify-content: center;
}

.workbench {
  height: 847px;
  display: grid;
  grid-template-columns: 430px 1181px;
  column-gap: 7px;
  padding-left: 3px;
}
.col { display: flex; flex-direction: column; min-width: 0; }
.col-left { gap: 8px; }
.col-right { gap: 6px; }

/* Panes */
.pane {
  border: 1.5px solid #cfcfcf;
  border-radius: 9px 9px 0 0;
  background: #f0f0f0;
  overflow: hidden;
}
.explorer { height: 477px; border-color: #c6d4e4; border-width: 1.5px 4px 4px 4px; }
.outline { height: 362px; border-bottom-width: 0; }
.editor { height: 491px; }
.props { height: 350px; }
.pane-head {
  height: 34px;
  display: flex;
  align-items: stretch;
  border-bottom: 1.5px solid #c4c4c4;
  white-space: nowrap;
}
.tab { display: flex; align-items: center; padding-left: 5px; }
.tab span { margin-left: 7px; }
.tab-explorer { background: linear-gradient(#e6edf5, #c6d6e7); padding-left: 3px; }
.tab-plain { background: linear-gradient(#fff, #f3f3f3); }
.tab-x { width: 13px; height: 13px; margin-left: 12px; }
.tab-curve { width: 52px; height: 34px; }
.tab-curve.blue { fill: url(#gradBlue); }
.tab-curve.white { fill: url(#gradWhite); }
.pane-tools { display: flex; align-items: center; padding: 0 9px 6px 0; }
.ti-menu { width: 8px; height: 20px; margin-left: 12px; }
.ti-min { width: 14px; height: 8px; margin: -12px 0 0 11px; }
.ti-menu + .ti-min { margin-left: 21px; }
.ti-max { width: 14px; height: 14px; margin: -2px 0 0 8px; }

/* Model Explorer */
.filter {
  height: 31px;
  margin: 6px 1px 0 3px;
  background: #fff;
  display: flex;
  align-items: center;
  padding: 0 7px;
  justify-content: space-between;
  border-bottom: 1px solid #ccc;
}
.filter svg { width: 14px; height: 14px; }
.tree-wrap { display: flex; margin-top: 8px; height: 393px; }
.tree { flex: 1; background: #fff; padding-top: 1px; }
.row { height: 30.1px; display: flex; align-items: center; white-space: nowrap; line-height: 30px; }
.tw { width: 27px; display: flex; justify-content: center; flex: none; }
.tw svg { width: 13px; height: 9px; fill: none; stroke: #555; stroke-width: 1.4px; }
.tw svg.right { transform: rotate(-90deg); stroke: #888; }
.ico { width: 29px; display: flex; justify-content: center; flex: none; }
.ico svg { width: 20px; height: 22px; }
.ico svg.small { width: 17px; height: 17px; }
.ico svg.proj { width: 24px; height: 22px; }
.d0 .ico { width: 28px; }
.d0 .ico svg { margin-left: 4px; }
.d1 { padding-left: 27px; }
.d2 { padding-left: 55px; }
.d3 { margin-left: 110px; width: 254px; }
.d3 .ico { width: 27px; }
.selected { background: #cce8ff; }
.tan { fill: #c9a77c; }
.star svg { width: 16px; height: 16px; }
.green { fill: #5fae8c; }
.dark { fill: #6b6b6b; }
.purple { fill: #a98ad0; }
.vbar {
  width: 30px;
  background: #f0f0f0;
  display: flex;
  flex-direction: column;
  align-items: center;
  position: relative;
}
.tri { width: 0; height: 0; border: 6px solid transparent; box-sizing: content-box; }
.tri.up { border-bottom: 7px solid #8c8c8c; border-top: 0; margin-top: 8px; }
.tri.down { border-top: 7px solid #8c8c8c; border-bottom: 0; margin-top: auto; margin-bottom: 9px; }
.tri.left { border-right: 7px solid #8c8c8c; border-left: 0; }
.tri.right { border-left: 7px solid #8c8c8c; border-right: 0; margin-left: auto; }
.vbar .thumb { width: 22px; height: 208px; background: #868686; margin-top: 143px; border-radius: 1px; }
.vbar.plain { width: 32px; }

/* Outline */
.thumb-canvas {
  position: relative;
  margin: 3px 1px 0 3px;
  height: 194px;
  background: #fff;
  font-size: 13px;
}
.tool-on {
  width: 27px;
  height: 26px;
  margin-left: 5px;
  background: #d5e8f8;
  display: flex;
  justify-content: center;
  align-items: center;
}

/* Diagram pieces: their place on the canvas is the content */
.node {
  position: absolute;
  background: #fff;
  border: 1px solid #666;
  border-right-color: #444;
  border-bottom-color: #333;
  display: flex;
  justify-content: center;
  align-items: flex-start;
  white-space: nowrap;
}
.msg { position: absolute; background: #808080; white-space: nowrap; text-align: center; color: #111; }
.lbl { position: absolute; white-space: nowrap; }
.wires { position: absolute; left: 0; top: 0; width: 100%; height: 100%; pointer-events: none; }

.t1 { left: 8px; top: 20px; width: 178px; height: 85px; padding-top: 5px; box-shadow: 1px 1px 1px #bbb; }
.t2 { left: 270px; top: 20px; width: 145px; height: 77px; padding-top: 5px; box-shadow: 1px 1px 1px #bbb; }
.t3 { left: 153px; top: 133px; width: 169px; height: 45px; padding-top: 5px; box-shadow: 1px 1px 1px #bbb; }
.thumb-canvas .net { width: 22px; height: 18px; margin-right: 3px; }
.thumb-canvas .node span { line-height: 18px; }
.t-msg { left: 15px; top: 47px; width: 162px; height: 21px; line-height: 21px; font-size: 13px; border: 1px solid #666; }
.t-to { left: 215px; top: 43px; color: #f44; line-height: 18px; }
.t-speed { left: 192px; top: 68px; line-height: 18px; }
.t-from { left: 122px; top: 109px; font-weight: 700; line-height: 18px; }

/* Editor */
.editor-body { display: flex; height: 455px; }
.editor-main { width: 897px; padding: 4px 0 0 2px; flex: none; }
.dtools {
  height: 24px;
  display: flex;
  align-items: center;
  background: #f7f7f7;
  padding-left: 4px;
}
.dt { height: 24px; }
.dsep { width: 1px; height: 24px; background: #ccc; }
.dtools-gray { width: 74px; height: 24px; background: #f0f0f0; }
.dtools-combo { width: 29px; height: 24px; background: #fff; display: flex; align-items: center; justify-content: center; }
.dtools-combo svg { width: 14px; height: 9px; fill: none; stroke: #bbb; stroke-width: 1.2px; margin-left: 4px; }
.canvas-wrap { display: flex; height: 396px; }
.canvas { position: relative; flex: 1; background: #fff; font-size: 25.8px; }
.n1 { left: 17px; top: 42px; width: 362px; height: 172px; padding-top: 9px; }
.n2 { left: 551px; top: 42px; width: 295px; height: 156px; padding-top: 9px; }
.n3 { left: 313px; top: 272px; width: 344px; height: 91px; padding-top: 9px; }
.canvas .node { border-width: 1.5px 2.5px 2.5px 1.5px; box-shadow: 4px 4px 3px #d4d4d4; }
.canvas .net { width: 46px; height: 38px; margin-right: 6px; }
.canvas .node span { line-height: 38px; }
.n-msg { left: 33px; top: 99px; width: 329px; height: 41px; line-height: 41px; border-top: 1px solid #666; }
.n-to { left: 440px; top: 91px; color: #f03030; line-height: 36px; }
.n-speed { left: 395px; top: 143px; line-height: 36px; }
.n-from { left: 251px; top: 225px; font-weight: 700; font-size: 23px; line-height: 36px; }
.hbar { height: 28px; display: flex; align-items: center; padding: 0 39px 0 8px; }

/* Palette */
.palette { width: 277px; flex: none; border-left: 1.5px solid #c8c8c8; }
.pal-head {
  height: 41px;
  margin-top: 2px;
  display: flex;
  align-items: center;
  padding: 0 15px 0 5px;
  background: linear-gradient(#fff, #f0f0f0);
  border-bottom: 2px solid #cfcfcf;
}
.pal-head span { margin-left: 7px; flex: 1; }
.pal-arrow { width: 9px; height: 16px; }
.pal-tools {
  height: 33px;
  display: flex;
  align-items: center;
  padding-left: 3px;
  border-bottom: 2px solid #d5d5d5;
}
.pal-cursor { width: 24px; height: 27px; border: 1px solid #ddd; border-bottom-color: #fff; background: #f7f7f7; }
.pal-cursor svg { width: 16px; height: 24px; margin-left: 5px; }
.note { height: 18px; }
.pal-section {
  height: 35px;
  margin-top: 2px;
  display: flex;
  align-items: center;
  padding: 0 7px 2px 4px;
  background: #eeeeee;
}
.pal-section span { margin-left: 6px; flex: 1; }
.pal-pin { width: 14px; height: 10px; }
.pal-list { background: #fff; height: 290px; padding-top: 1px; }
.pal-item { height: 38.4px; display: flex; align-items: center; padding-left: 27px; white-space: nowrap; }
.pal-item svg { width: 16px; height: 16px; margin: -5px 6px 0 0; }
.pal-item.edge { padding-left: 23px; }
.pal-item.edge svg { width: 20px; height: 22px; margin: -12px 4px 0 0; }

/* Properties */
.tab-props { padding-left: 4px; }
.tab-off {
  display: flex;
  align-items: center;
  padding: 0 3px 0 8px;
  border-right: 1.5px solid #cfcfcf;
}
.tab-off span { margin-left: 7px; }
.off-interp { margin-left: -10px; padding-left: 0; }
.props-band { height: 48px; margin-top: 4px; background: #e2e2e2; }
.props-body { display: flex; height: 262px; margin-top: 1px; }
.props-side { width: 100px; flex: none; padding-top: 17px; margin-left: 1px; border-right: 1.5px solid #cfcfcf; }
.props-default {
  height: 38px;
  background: #fff;
  margin-right: -2px;
  font-weight: 700;
  font-size: 18.5px;
  line-height: 36px;
  padding-left: 11px;
  border-bottom: 2px solid #d8d8d8;
  border-top: 1px solid #d8d8d8;
  position: relative;
}
.props-main { flex: 1; min-width: 0; }
.props-table { height: 231px; background: #fff; padding: 14px 4px 0 10px; }
.pt-row {
  height: 30.2px;
  border-bottom: 1.5px solid #ededed;
  display: flex;
  position: relative;
  background: linear-gradient(#eee, #eee) 715px 0 / 1px 100% no-repeat;
}
.pt-head { height: 58px; line-height: 26px; font-size: 17.5px; color: #333; }
.pt-head span { padding-left: 5px; width: 716px; flex: none; }
.props-scroll { height: 31px; padding: 5px 0 0 29px; }
.props-scroll i { width: 596px; height: 20px; background: #858585; }

/* Status bar */
.statusbar {
  position: absolute;
  left: 0;
  right: 0;
  bottom: 0;
  height: 34px;
  display: flex;
  align-items: center;
  padding: 0 6px;
  white-space: nowrap;
}
.status-msg { margin-left: 11px; width: 694px; }
.statusbar .grip { margin: 0 3px; height: 24px; }
.heap {
  width: 218px;
  height: 34px;
  position: relative;
  background: #f4f4f4;
  border-top: 2px solid #aaa;
  border-left: 1px solid #aaa;
  font-size: 19.5px;
  text-align: center;
  line-height: 32px;
  color: #222;
}
.heap-used { position: absolute; left: 0; top: 0; bottom: 0; width: 113px; background: #8e8e8e; }
.heap span { position: relative; }
.heap-trash { width: 16px; height: 26px; margin: 0 2px 0 4px; }

/* Toolbar spacing: these icons sit at uneven distances */
.m2 { margin-left: 2px; }
.m3 { margin-left: 3px; }
.m4 { margin-left: 4px; }
.m5 { margin-left: 5px; }
.m6 { margin-left: 6px; }
.m7 { margin-left: 7px; }
.m8 { margin-left: 8px; }
.m9 { margin-left: 9px; }
.m10 { margin-left: 10px; }
.m11 { margin-left: 11px; }
.m12 { margin-left: 12px; }
.m13 { margin-left: 13px; }
.m20 { margin-left: 20px; }
```
